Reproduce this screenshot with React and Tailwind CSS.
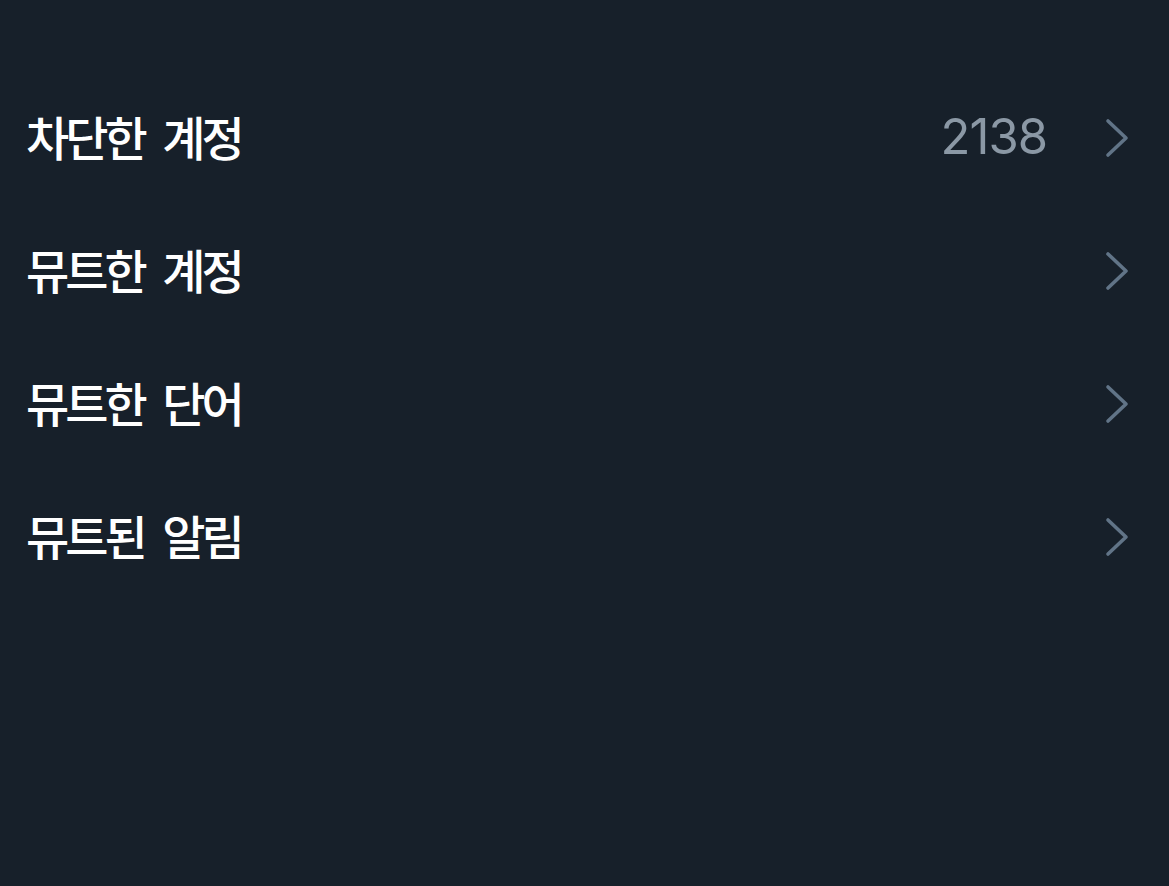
import React from "react";

const rows = [
  { label: "차단한 계정", value: "2138" },
  { label: "뮤트한 계정" },
  { label: "뮤트한 단어" },
  { label: "뮤트된 알림" },
];

function Chevron() {
  return (
    <svg width="24" height="40" viewBox="0 0 24 40" fill="none" className="shrink-0 mb-[2px]">
      <polyline points="3,3 21,20 3,37" stroke="#617487" strokeWidth="3.6" strokeLinecap="round" strokeLinejoin="round" />
    </svg>
  );
}

export default function App() {
  return (
    <div className="w-[1169px] h-[886px] bg-[#17202a] pt-[72px]">
      {rows.map((r) => (
        <div key={r.label} className="h-[133px] flex items-center pl-[26px] pr-[40px]">
          <span
            className="flex-1 text-white text-[47px] font-medium tracking-[-4px] [word-spacing:12px] pb-[6px] leading-none"
            style={{ fontFamily: '"Noto Sans CJK KR", "Noto Sans", sans-serif' }}
          >
            {r.label}
          </span>
          {r.value && (
            <span
              className="text-[#8b98a5] text-[49px] mr-[58px] tracking-[-1px] pb-[4px] leading-none"
              style={{ fontFamily: 'Inter, "Noto Sans", sans-serif' }}
            >
              {r.value}
            </span>
          )}
          <Chevron />
        </div>
      ))}
    </div>
  );
}
